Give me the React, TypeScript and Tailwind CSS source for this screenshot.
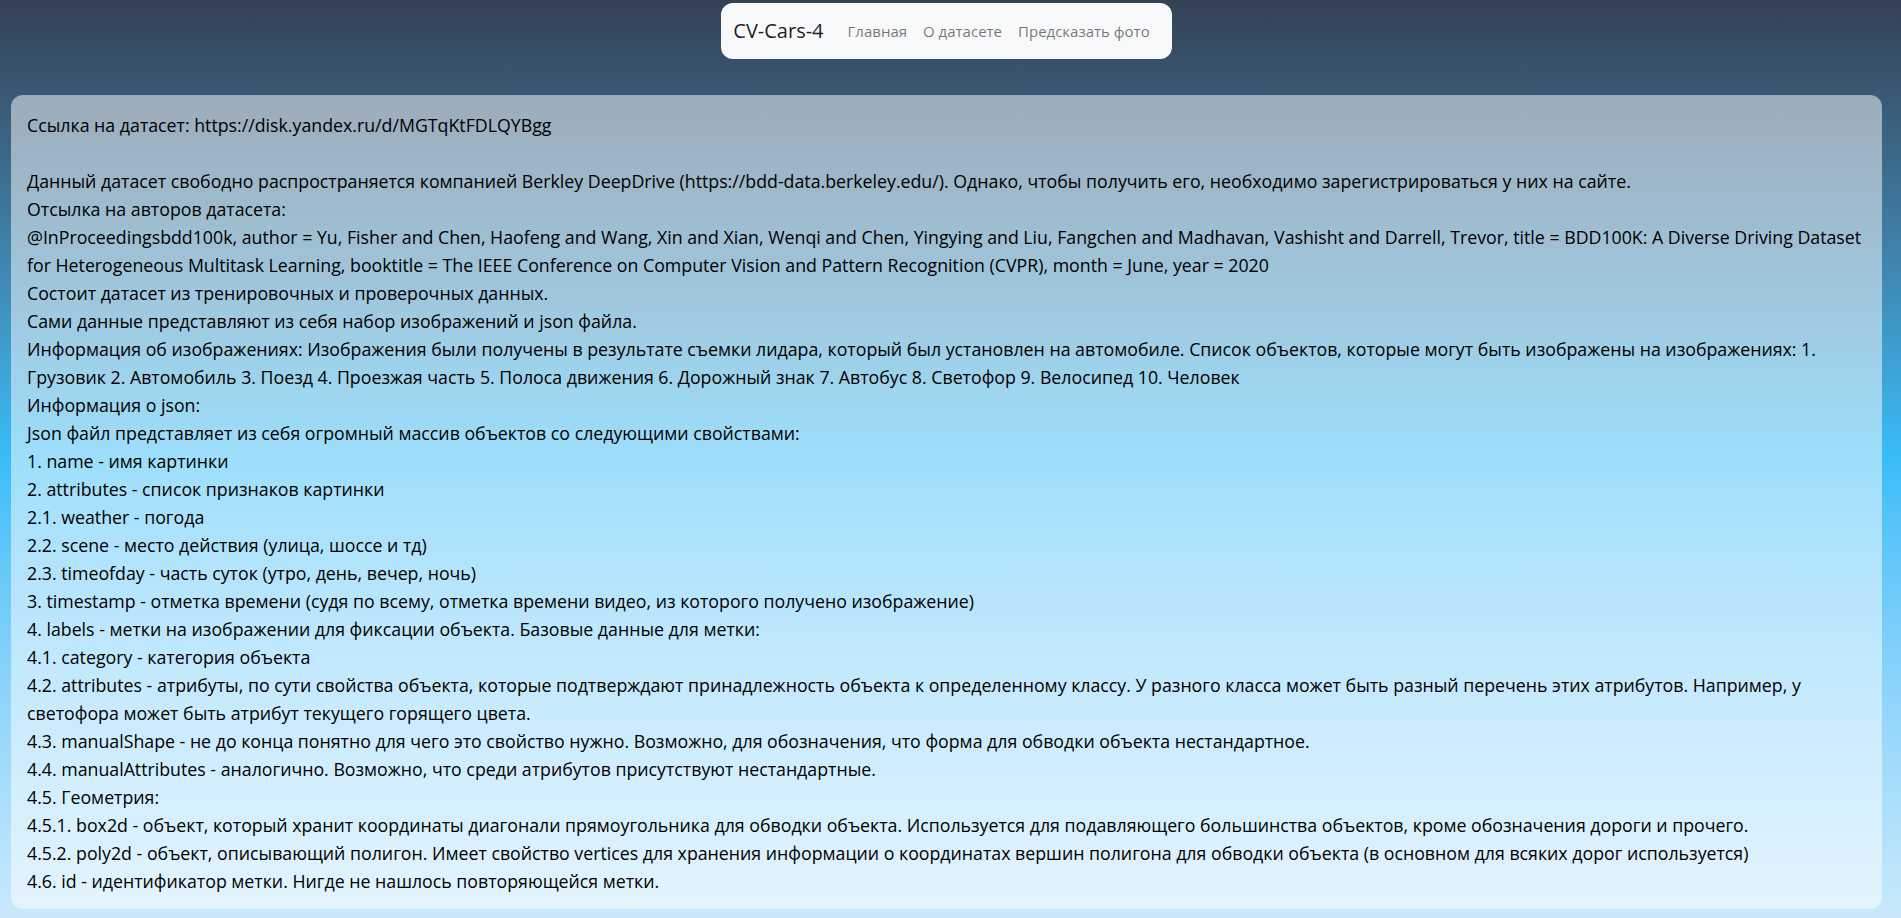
const lines: string[] = [
  "Данный датасет свободно распространяется компанией Berkley DeepDrive (https://bdd-data.berkeley.edu/). Однако, чтобы получить его, необходимо зарегистрироваться у них на сайте.",
  "Отсылка на авторов датасета:",
  "@InProceedingsbdd100k, author = Yu, Fisher and Chen, Haofeng and Wang, Xin and Xian, Wenqi and Chen, Yingying and Liu, Fangchen and Madhavan, Vashisht and Darrell, Trevor, title = BDD100K: A Diverse Driving Dataset for Heterogeneous Multitask Learning, booktitle = The IEEE Conference on Computer Vision and Pattern Recognition (CVPR), month = June, year = 2020",
  "Состоит датасет из тренировочных и проверочных данных.",
  "Сами данные представляют из себя набор изображений и json файла.",
  "Информация об изображениях: Изображения были получены в результате съемки лидара, который был установлен на автомобиле. Список объектов, которые могут быть изображены на изображениях: 1. Грузовик 2. Автомобиль 3. Поезд 4. Проезжая часть 5. Полоса движения 6. Дорожный знак 7. Автобус 8. Светофор 9. Велосипед 10. Человек",
  "Информация о json:",
  "Json файл представляет из себя огромный массив объектов со следующими свойствами:",
  "1. name - имя картинки",
  "2. attributes - список признаков картинки",
  "2.1. weather - погода",
  "2.2. scene - место действия (улица, шоссе и тд)",
  "2.3. timeofday - часть суток (утро, день, вечер, ночь)",
  "3. timestamp - отметка времени (судя по всему, отметка времени видео, из которого получено изображение)",
  "4. labels - метки на изображении для фиксации объекта. Базовые данные для метки:",
  "4.1. category - категория объекта",
  "4.2. attributes - атрибуты, по сути свойства объекта, которые подтверждают принадлежность объекта к определенному классу. У разного класса может быть разный перечень этих атрибутов. Например, у светофора может быть атрибут текущего горящего цвета.",
  "4.3. manualShape - не до конца понятно для чего это свойство нужно. Возможно, для обозначения, что форма для обводки объекта нестандартное.",
  "4.4. manualAttributes - аналогично. Возможно, что среди атрибутов присутствуют нестандартные.",
  "4.5. Геометрия:",
  "4.5.1. box2d - объект, который хранит координаты диагонали прямоугольника для обводки объекта. Используется для подавляющего большинства объектов, кроме обозначения дороги и прочего.",
  "4.5.2. poly2d - объект, описывающий полигон. Имеет свойство vertices для хранения информации о координатах вершин полигона для обводки объекта (в основном для всяких дорог используется)",
  "4.6. id - идентификатор метки. Нигде не нашлось повторяющейся метки.",
];

export default function App() {
  return (
    <div className="min-h-screen bg-linear-to-b from-[#334155] via-[#38bdf8] to-[#c9e9fb] pl-[11px] pr-[19px] pt-[3px] pb-[9px] font-['Open_Sans',sans-serif] text-[#111]">
      {/* Navbar */}
      <nav className="mx-auto flex h-[56px] w-fit items-center rounded-xl bg-[#f8f9fa] pl-3 pr-[14px]">
        <span className="mr-4 text-[20px] text-black/90">CV-Cars-4</span>
        <a className="px-2 text-[15px] text-black/55">Главная</a>
        <a className="px-2 text-[15px] text-black/55">О датасете</a>
        <a className="px-2 text-[15px] text-black/55">Предсказать фото</a>
      </nav>

      {/* Dataset info */}
      <div className="mt-9 rounded-xl bg-white/50 px-4 pt-4 pb-[14px] text-[17.75px] leading-[28px] text-black">
        <p>Ссылка на датасет: https://disk.yandex.ru/d/MGTqKtFDLQYBgg</p>
        <br />
        {lines.map((l, i) => (
          <p key={i}>{l}</p>
        ))}
      </div>
    </div>
  );
}
